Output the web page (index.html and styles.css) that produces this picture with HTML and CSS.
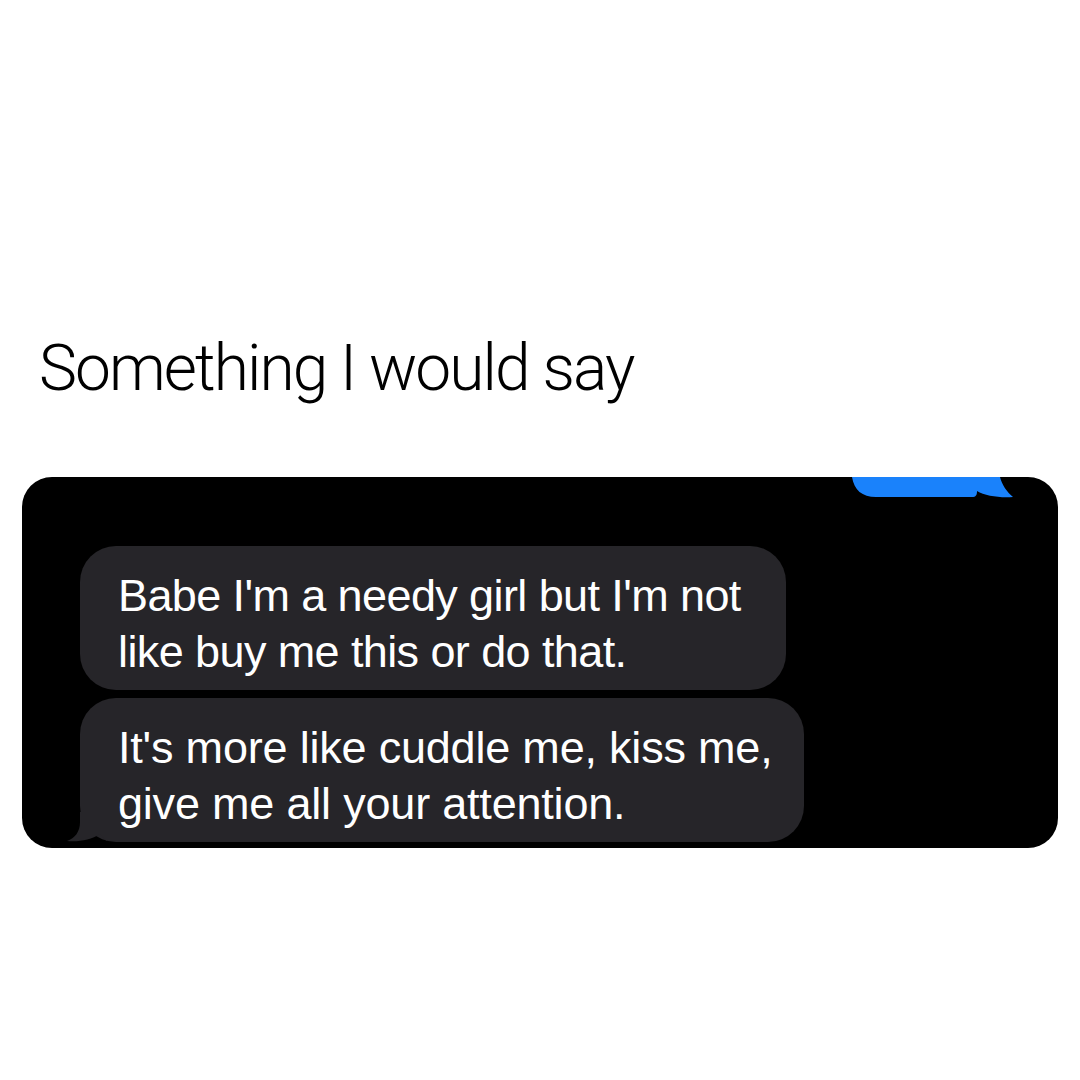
FILE: index.html
```html
<!DOCTYPE html>
<html>
<head>
<meta charset="utf-8">
<link rel="stylesheet" href="styles.css">
</head>
<body>
<main class="page">
  <h1 class="title">Something I would say</h1>
  <section class="chat">
    <div class="sent-row">
      <svg class="sent" width="170" height="22" viewBox="0 0 170 22">
        <path d="M4 0 C6 13 14 20 28 20 L124 20 C128 20 129 18 129 14 C137 19 152 21 165 20 C159 15 154 8 152 0 Z" fill="#1a82fb"/>
      </svg>
    </div>
    <div class="received">
      <div class="bubble b1">Babe I'm a needy girl but I'm not<br>like buy me this or do that.</div>
      <div class="bubble b2">It's more like cuddle me, kiss me,<br>give me all your attention.
        <svg class="tail" width="40" height="30" viewBox="0 0 40 30">
          <path d="M13 0 L13 10 C13 20 8 26 0 29 C12 30 24 28 33 22 C36 25 38 28 40 29 L40 0 Z" fill="#262529"/>
        </svg>
      </div>
    </div>
  </section>
</main>
</body>
</html>
```

FILE: styles.css
```css
html, body {
  margin: 0;
  padding: 0;
  background: #ffffff;
}

.page {
  width: 1080px;
  height: 1080px;
  padding-top: 329px;
  box-sizing: border-box;
}

.title {
  margin: 0 0 0 39px;
  font-family: "Roboto", "Liberation Sans", sans-serif;
  font-weight: 300;
  font-size: 64px;
  line-height: 80px;
  color: #000;
  letter-spacing: -1.9px;
}

.chat {
  margin: 68px 0 0 22px;
  width: 1036px;
  height: 371px;
  background: #000;
  border-radius: 30px;
  overflow: hidden;
  display: flex;
  flex-direction: column;
}

.sent-row {
  display: flex;
  justify-content: flex-end;
  padding-right: 40px;
  height: 22px;
}

.sent {
  display: block;
}

.received {
  margin-top: 47px;
  padding-left: 58px;
  display: flex;
  flex-direction: column;
  align-items: flex-start;
  gap: 8px;
}

.bubble {
  position: relative;
  background: #262529;
  color: #ffffff;
  border-radius: 36px;
  height: 144px;
  box-sizing: border-box;
  padding: 22px 0 0 38px;
  font-family: "Liberation Sans", Arial, sans-serif;
  font-size: 45px;
  line-height: 56px;
  letter-spacing: -0.6px;
  white-space: nowrap;
}

.b1 {
  width: 706px;
}

.b2 {
  width: 724px;
  letter-spacing: -0.2px;
}

.tail {
  position: absolute;
  left: -13px;
  bottom: 0;
  display: block;
}
```
